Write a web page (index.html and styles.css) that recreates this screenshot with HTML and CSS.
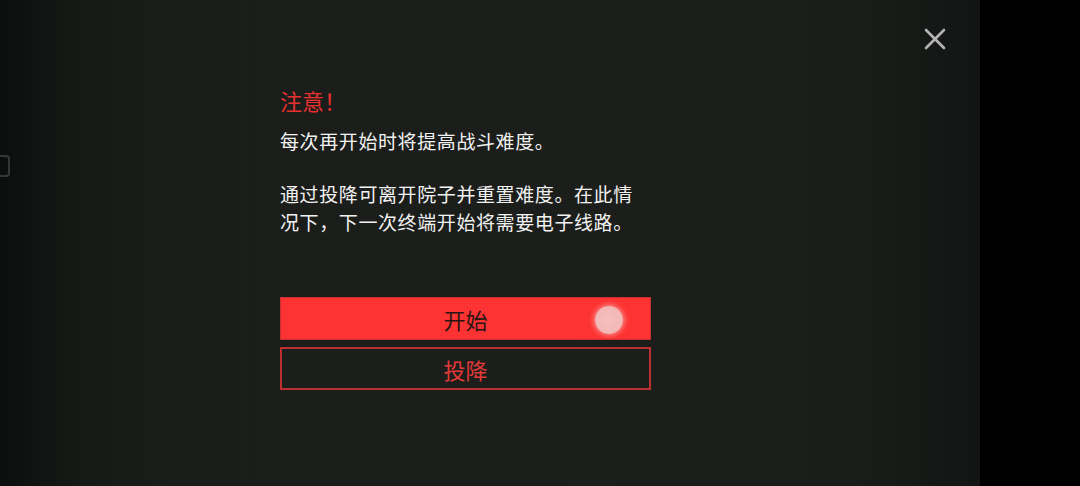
FILE: index.html
```html
<!DOCTYPE html>
<html lang="zh-CN">
<head>
    <meta charset="UTF-8">
    <meta name="viewport" content="width=device-width, initial-scale=1.0">
    <title>终端</title>
    <link rel="stylesheet" href="styles.css">
</head>
<body>
    <div class="screen">
        <div class="edge-tab"></div>

        <button class="close" aria-label="关闭">
            <svg width="24" height="24" viewBox="0 0 24 24">
                <path d="M3 3 L21 21 M21 3 L3 21" stroke="#b3b4b3" stroke-width="2.6" stroke-linecap="round" fill="none"/>
            </svg>
        </button>

        <div class="dialog">
            <h2 class="title">注意！</h2>
            <p class="text">每次再开始时将提高战斗难度。</p>
            <p class="text gap">通过投降可离开院子并重置难度。在此情况下，下一次终端开始将需要电子线路。</p>

            <div class="actions">
                <button class="btn btn-start">
                    开始
                    <span class="touch"></span>
                </button>
                <button class="btn btn-surrender">投降</button>
            </div>
        </div>
    </div>
    <div class="bezel"></div>
</body>
</html>
```

FILE: styles.css
```css
body {
    margin: 0;
    width: 1080px;
    height: 486px;
    display: flex;
    overflow: hidden;
    background-color: #000;
    font-family: "Noto Sans CJK SC", "Noto Sans", sans-serif;
}
.screen {
    position: relative;
    width: 980px;
    height: 486px;
    overflow: hidden;
    background: linear-gradient(to right, #0c0e0d 0px, #161816 70px, #1b1d1a 170px, #1c1e1b 600px, #1b1d1a 850px, #131514 980px);
}
.bezel {
    flex: 1;
    background-color: #000;
}
.edge-tab {
    position: absolute;
    left: -14px;
    top: 155px;
    width: 20px;
    height: 18px;
    border: 2px solid #353735;
    border-radius: 4px;
}
.close {
    position: absolute;
    top: 27px;
    left: 923px;
    padding: 0;
    border: none;
    background: none;
    display: flex;
}
.dialog {
    width: 371px;
    margin-left: 280px;
    padding-top: 86px;
    display: flex;
    flex-direction: column;
}
.title {
    margin: 0;
    font-size: 22px;
    line-height: 28px;
    font-weight: 400;
    color: #e8312e;
}
.text {
    margin: 13px 0 0 0;
    width: 360px;
    font-size: 19px;
    line-height: 28px;
    letter-spacing: 0.6px;
    color: #f2f2f2;
}
.text.gap {
    margin-top: 25px;
}
.actions {
    margin-top: 61px;
    display: flex;
    flex-direction: column;
    gap: 7px;
}
.btn {
    position: relative;
    height: 43px;
    padding: 0;
    font-family: inherit;
    font-size: 22px;
    line-height: 1;
    display: flex;
    align-items: center;
    justify-content: center;
}
.btn-start {
    background-color: #fd3333;
    border: 1px solid #c83030;
    color: #2a1414;
}
.btn-surrender {
    background-color: transparent;
    border: 2px solid #bd2f2e;
    color: #e23a39;
}
/* touch feedback dot */
.touch {
    position: absolute;
    left: 314px;
    top: 8px;
    width: 28px;
    height: 28px;
    border-radius: 50%;
    background: radial-gradient(circle, #f3c0c0 0%, #f4b6b6 70%, #f0a6a6 100%);
    box-shadow: 0 0 4px 2px rgba(255, 170, 170, 0.6);
}
```
